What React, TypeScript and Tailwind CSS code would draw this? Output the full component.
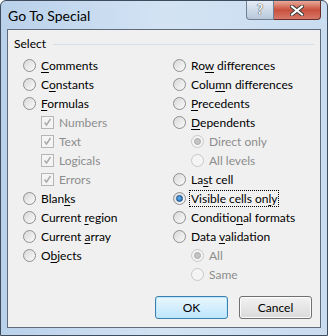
import React from 'react';

type Item = { label: string; key?: number; indent?: boolean; disabled?: boolean; checked?: boolean; focus?: boolean };

const leftItems: (Item & { kind: 'radio' | 'check' })[] = [
    { kind: 'radio', label: 'Comments', key: 0 },
    { kind: 'radio', label: 'Constants', key: 1 },
    { kind: 'radio', label: 'Formulas', key: 0 },
    { kind: 'check', label: 'Numbers', indent: true, disabled: true, checked: true },
    { kind: 'check', label: 'Text', indent: true, disabled: true, checked: true },
    { kind: 'check', label: 'Logicals', indent: true, disabled: true, checked: true },
    { kind: 'check', label: 'Errors', indent: true, disabled: true, checked: true },
    { kind: 'radio', label: 'Blanks', key: 4 },
    { kind: 'radio', label: 'Current region', key: 8 },
    { kind: 'radio', label: 'Current array', key: 8 },
    { kind: 'radio', label: 'Objects', key: 1 },
];

const rightItems: (Item & { kind: 'radio' | 'check' })[] = [
    { kind: 'radio', label: 'Row differences', key: 2 },
    { kind: 'radio', label: 'Column differences', key: 4 },
    { kind: 'radio', label: 'Precedents', key: 0 },
    { kind: 'radio', label: 'Dependents', key: 0 },
    { kind: 'radio', label: 'Direct only', indent: true, disabled: true, checked: true },
    { kind: 'radio', label: 'All levels', indent: true, disabled: true },
    { kind: 'radio', label: 'Last cell', key: 2 },
    { kind: 'radio', label: 'Visible cells only', key: 16, checked: true, focus: true },
    { kind: 'radio', label: 'Conditional formats', key: 8 },
    { kind: 'radio', label: 'Data validation', key: 5 },
    { kind: 'radio', label: 'All', indent: true, disabled: true, checked: true },
    { kind: 'radio', label: 'Same', indent: true, disabled: true },
];

const Label = ({ text, k }: { text: string; k?: number }) => {
    if (k === undefined) return <>{text}</>;
    return (
        <>
            {text.slice(0, k)}
            <span className="underline underline-offset-2">{text[k]}</span>
            {text.slice(k + 1)}
        </>
    );
};

const Radio = ({ checked, disabled }: { checked?: boolean; disabled?: boolean }) => (
    <span
        className={`flex h-[13px] w-[13px] shrink-0 items-center justify-center rounded-full border ${
            disabled ? 'border-[#c8c8c8] bg-[#f4f4f4]' : 'border-[#8f8f8f] bg-gradient-to-br from-[#d8d8d8] to-[#fbfbfb]'
        }`}
    >
        {checked && (
            <span
                className={`h-[7px] w-[7px] rounded-full ${
                    disabled ? 'bg-[#c4c4c4] border border-[#aaaaaa]' : 'bg-[radial-gradient(circle_at_40%_40%,#5fb4f0,#1b5fa8)] border border-[#1d4f8a]'
                }`}
            />
        )}
    </span>
);

const Check = () => (
    <span className="flex h-[13px] w-[13px] shrink-0 items-center justify-center border border-[#b6b6b6] bg-[#f4f4f4]">
        <svg width="9" height="9" viewBox="0 0 9 9">
            <path d="M1.5 4.5 L3.5 7 L7.5 1" fill="none" stroke="#a8a8a8" strokeWidth="1.4" />
        </svg>
    </span>
);

const Row = ({ item }: { item: Item & { kind: 'radio' | 'check' } }) => (
    <div className={`flex h-[19px] items-center ${item.indent ? 'pl-[18px]' : 'pl-0'}`}>
        {item.kind === 'radio' ? <Radio checked={item.checked} disabled={item.disabled} /> : <Check />}
        <span
            className={`ml-[4px] px-[1px] leading-[15px] ${item.disabled ? 'text-[#8d8d8d]' : 'text-black'} ${
                item.focus ? 'outline outline-1 outline-dotted outline-black' : ''
            }`}
        >
            <Label text={item.label} k={item.key} />
        </span>
    </div>
);

export default function App() {
    return (
        <div className="h-[336px] w-[328px] overflow-hidden rounded-t-[6px] border border-[#3e4d5e] bg-gradient-to-r from-[#b9d1ea] via-[#d3e3f4] to-[#c9dcf0] text-[12px]" style={{ fontFamily: 'Lato, "Noto Sans", sans-serif' }}>
            <div className="flex h-[28px] items-start">
                <div className="pl-[7px] pt-[7px] text-[14px] leading-[16px] text-black">Go To Special</div>
                <div className="ml-auto mr-[6px] flex">
                    <div className="flex h-[19px] w-[28px] items-center justify-center rounded-bl-[4px] border border-t-0 border-[#6d7f95] bg-gradient-to-b from-[#e4ecf5] to-[#b8c8da] text-[13px] font-bold text-white [text-shadow:0_0_1px_#333,0_0_1px_#333]">
                        ?
                    </div>
                    <div className="flex h-[19px] w-[47px] items-center justify-center rounded-br-[4px] border border-l-0 border-t-0 border-[#6a2e2a] bg-gradient-to-b from-[#e9a99a] via-[#c9503d] to-[#d6786a]">
                        <svg width="14" height="11" viewBox="0 0 14 11">
                            <path d="M2 1.5 L12 9.5 M12 1.5 L2 9.5" stroke="#3b3b3b" strokeWidth="4" strokeLinecap="square" />
                            <path d="M2 1.5 L12 9.5 M12 1.5 L2 9.5" stroke="#ffffff" strokeWidth="2" strokeLinecap="square" />
                        </svg>
                    </div>
                </div>
            </div>
            <div className="mx-[6px] h-[299px] border border-[#5f6b7a] bg-[#f0f0f0] px-[6px] pt-[6px]">
                <div className="flex items-center">
                    <span className="leading-[16px] text-black">Select</span>
                    <div className="ml-[7px] h-px flex-1 bg-[#d5dfe5]" />
                </div>
                <div className="mt-[4px] flex">
                    <div className="w-[150px] pl-[9px]">
                        {leftItems.map(it => (
                            <Row key={it.label} item={it} />
                        ))}
                    </div>
                    <div className="pl-[9px]">
                        {rightItems.map(it => (
                            <Row key={it.label} item={it} />
                        ))}
                    </div>
                </div>
                <div className="mt-[12px] flex justify-end gap-[11px] pr-[2px]">
                    <button className="h-[23px] w-[73px] rounded-[3px] border border-[#3c7fb1] bg-gradient-to-b from-[#eaf6fd] to-[#bee6fd] text-black shadow-[inset_0_0_0_1px_#bde9fc]">OK</button>
                    <button className="h-[23px] w-[73px] rounded-[3px] border border-[#707070] bg-gradient-to-b from-[#f2f2f2] to-[#dadada] text-black shadow-[inset_0_0_0_1px_#fcfcfc]">Cancel</button>
                </div>
            </div>
        </div>
    );
}
